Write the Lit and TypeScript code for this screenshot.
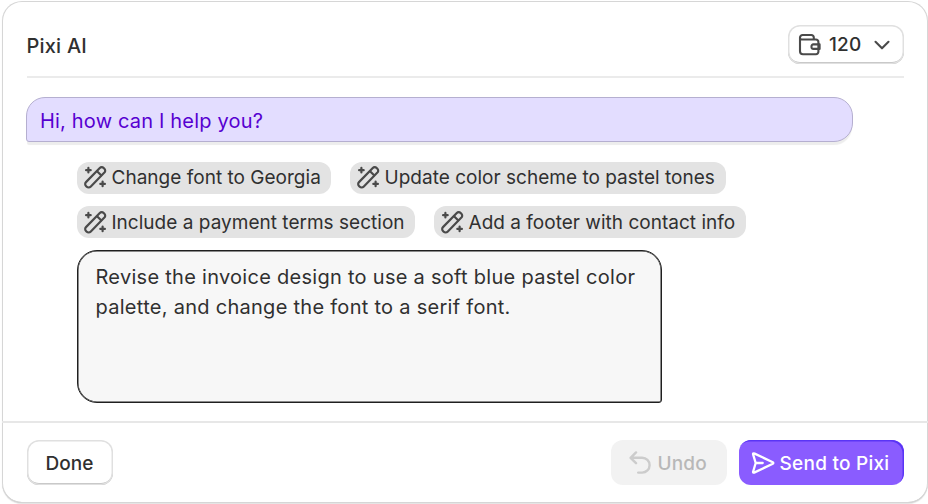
import { LitElement, html, css } from "lit";
import { customElement } from "lit/decorators.js";

const wand = html`<svg class="wand" viewBox="0 0 22 22" width="23" height="23">
  <g fill="none" stroke="currentColor" stroke-width="2.1" stroke-linecap="round" stroke-linejoin="round">
    <path d="M15.1 1.9a2.6 2.6 0 0 1 3.7 0l.7.7a2.6 2.6 0 0 1 0 3.7L6.3 19.8a2.6 2.6 0 0 1-3.7 0l-.7-.7a2.6 2.6 0 0 1 0-3.7Z" />
    <path d="M12.7 5.2l3.7 3.7" />
    <path d="M4.2 1.8v4.4M2 4h4.400M17.8 14.900v4.400M15.600 17.100h4.400" />
  </g>
</svg>`;

const wallet = html`<svg viewBox="0 0 24 24" width="24" height="24">
  <g fill="none" stroke="#4a4a4a" stroke-width="2.1" stroke-linejoin="round" stroke-linecap="round">
    <path d="M2 4.600v13.600a3 3 0 0 0 3 3h13a2.400 2.400 0 0 0 2.400-2.400v-9.900a2.400 2.400 0 0 0-2.400-2.400H3.800a1.800 1.800 0 0 1-1.800-1.900a2.600 2.600 0 0 1 2.600-2.600h8.800a2.400 2.400 0 0 1 2.400 2.400v2.100" />
    <path d="M21.600 11.400h-6.400a1.700 1.700 0 0 0-1.700 1.700v1.100a1.700 1.700 0 0 0 1.700 1.700h6.400z" />
  </g>
</svg>`;

const chevron = html`<svg viewBox="0 0 16 10" width="16" height="10">
  <path d="M1.5 1.8L8 8.3l6.500-6.500" fill="none" stroke="#4a4a4a" stroke-width="2.1" stroke-linecap="round" stroke-linejoin="round" />
</svg>`;

const undo = html`<svg viewBox="0 0 22 24" width="22" height="24">
  <path d="M7 1.400L1.600 6.800L7 12.200M1.800 6.800h11.400a7.200 7.200 0 0 1 0 14.800H9.200" fill="none" stroke="currentColor" stroke-width="2.400" stroke-linecap="round" stroke-linejoin="round" />
</svg>`;

const send = html`<svg viewBox="0 0 24 22" width="24" height="22">
  <path d="M2.100 2.300c-.2-.7.4-1.200 1-.9l18.700 8.800c.7.4.7 1.200 0 1.600l-18.700 8.800c-.6.3-1.200-.2-1-.9L4.700 11zM4.700 11h7" fill="none" stroke="currentColor" stroke-width="2.300" stroke-linecap="round" stroke-linejoin="round" />
</svg>`;

@customElement("app-root")
export class AppRoot extends LitElement {
  static styles = css`
    :host { display: block; height: 504px; box-sizing: border-box; padding: 1px 0 1px 1.5px; background: #fff; overflow: hidden;
      font-family: Inter, "Liberation Sans", sans-serif; color: #303030; font-size: 19px; }
    * { box-sizing: border-box; }
    svg { display: block; flex: none; }
    .card { height: 502px; border-radius: 20px; background: #fff; display: flex; flex-direction: column;
      box-shadow: inset 0 0 0 1px #d6d6d6, inset 0 -1px 0 #c4c4c4, 0 1px 1px #e3e3e3; }
    .head { height: 77px; margin: 0 24.5px 0 25px; padding-top: 24px; border-bottom: 2px solid #ebebeb;
      display: flex; justify-content: space-between; align-items: flex-start; }
    .title { font-weight: 500; font-size: 20px; line-height: 42px; letter-spacing: .2px; white-space: nowrap; }
    .credits { width: 116px; height: 39px; border-radius: 12px; display: flex; align-items: center; padding-left: 10.5px;
      box-shadow: inset 0 0 0 1.5px #e0e0e0, inset 0 -2px 0 #b3b3b3; font-weight: 500; }
    .credits span { margin: 0 12px 0 7px; width: 33px; letter-spacing: .2px; line-height: 40px; padding-top: 1px; }
    .body { height: 343px; padding: 19px 0 0 24.5px; }
    .hello { width: 827px; height: 45px; border-radius: 19px 19px 19px 3px; background: #e3ddff; border: 1px solid #b5afd0;
      color: #5700d1; font-size: 20px; line-height: 46px; padding-left: 13px; letter-spacing: .18px; box-shadow: 0 4px 1px -1px #ededed; }
    .chips { display: flex; flex-wrap: wrap; margin: 19.500px 0 0 51px; gap: 12.5px 19px; width: 720px; }
    .chip { height: 32px; border-radius: 12px; background: #e3e3e3; display: flex; align-items: center; padding-left: 7px; gap: 4.500px; white-space: nowrap; line-height: 32px; letter-spacing: .02px; }
    .chip span { padding-top: 1px; }
    .wand { color: #4a4a4a; }
    .c1 { width: 254px; } .c2 { width: 376px; } .c3 { width: 338px; } .c4 { width: 312px; }
    .prompt { margin: 12px 0 0 51px; width: 584.5px; height: 152.5px; border: 1.5px solid #1f1f1f; border-radius: 20px 20px 3px 20px;
      background: #f7f7f7; box-shadow: inset 0 0 0 .5px #1f1f1f; font-size: 20px; letter-spacing: .28px; line-height: 30px; padding: 10.500px 0 0 17.500px; white-space: nowrap; }
    .foot { flex: 1; border-top: 2px solid #e7e7e7; padding: 17px 24.5px 0 25px; display: flex; font-weight: 500; }
    .btn { height: 45px; border-radius: 12px; display: flex; align-items: center; justify-content: center; white-space: nowrap; }
    .btn span { padding-top: 1px; }
    .done { width: 86px; box-shadow: inset 0 0 0 1.5px #e0e0e0, inset 0 -2px 0 #b3b3b3; margin-right: auto; }
    .undo { width: 116px; background: #f2f2f2; color: #b8b8b8; gap: 7px; margin-right: 12px; padding-right: 1.500px; letter-spacing: .15px; }
    .undo svg { color: #cccccc; }
    .send { width: 165px; background: #8a5cff; color: #fff; gap: 5px; letter-spacing: .25px; padding-right: 2px;
      box-shadow: inset -1.5px 1.5px 0 #5a35f5; }
  `;

  render() {
    return html`<div class="card">
      <div class="head">
        <div class="title">Pixi AI</div>
        <div class="credits">${wallet}<span>120</span>${chevron}</div>
      </div>
      <div class="body">
        <div class="hello">Hi, how can I help you?</div>
        <div class="chips">
          <div class="chip c1">${wand}<span>Change font to Georgia</span></div>
          <div class="chip c2">${wand}<span>Update color scheme to pastel tones</span></div>
          <div class="chip c3">${wand}<span>Include a payment terms section</span></div>
          <div class="chip c4">${wand}<span>Add a footer with contact info</span></div>
        </div>
        <div class="prompt">Revise the invoice design to use a soft blue pastel color<br />palette, and change the font to a serif font.</div>
      </div>
      <div class="foot">
        <div class="btn done"><span>Done</span></div>
        <div class="btn undo">${undo}<span>Undo</span></div>
        <div class="btn send">${send}<span>Send to Pixi</span></div>
      </div>
    </div>`;
  }
}
